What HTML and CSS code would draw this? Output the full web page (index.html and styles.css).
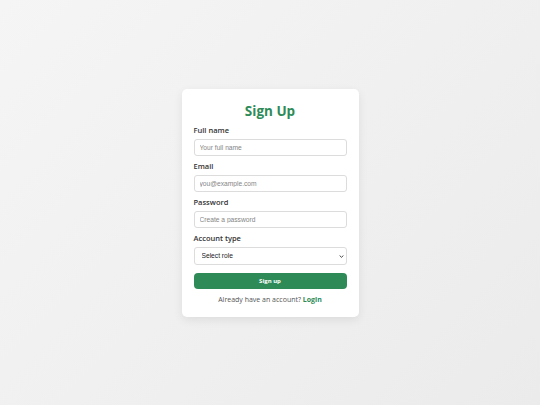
FILE: index.html
```html
<!DOCTYPE html>
<html lang="en">
<head>
<meta charset="utf-8">
<title>Sign Up</title>
<link rel="stylesheet" href="styles.css">
</head>
<body>
<main class="page">
  <form class="card">
    <h2 class="title">Sign Up</h2>
    <div class="field">
      <label class="label" for="name">Full name</label>
      <input class="input" id="name" type="text" placeholder="Your full name">
    </div>
    <div class="field">
      <label class="label" for="email">Email</label>
      <input class="input" id="email" type="email" placeholder="you@example.com">
    </div>
    <div class="field">
      <label class="label" for="pw">Password</label>
      <input class="input" id="pw" type="password" placeholder="Create a password">
    </div>
    <div class="field">
      <label class="label" for="role">Account type</label>
      <div class="select-wrap">
        <select class="select" id="role">
          <option>Select role</option>
          <option>Student</option>
          <option>Teacher</option>
        </select>
        <svg class="chev" width="5" height="3" viewBox="0 0 5 3"><path d="M0.6 0.5 L2.5 2.3 L4.4 0.5" fill="none" stroke="#333" stroke-width="0.9"/></svg>
      </div>
    </div>
    <button class="btn" type="button">Sign up</button>
    <p class="footer">Already have an account? <a class="link" href="#">Login</a></p>
  </form>
</main>
</body>
</html>
```
FILE: styles.css
```css
* { box-sizing: border-box; }
html, body { margin: 0; padding: 0; height: 100%; }
body {
  font-family: "Open Sans", "Noto Sans", sans-serif;
  background: linear-gradient(135deg, #f5f5f5 0%, #ebebeb 100%);
}
.page {
  height: 100%;
  display: flex;
  align-items: center;
  justify-content: center;
}
.card {
  width: 177px;
  background: #fff;
  border-radius: 5px;
  padding: 12px 12px 11px;
  box-shadow: 0 3px 10px rgba(0,0,0,0.08);
  display: flex;
  flex-direction: column;
}
.title {
  margin: 0 0 4px;
  text-align: center;
  color: #2e8b57;
  font-size: 13.5px;
  line-height: 20px;
  font-weight: 700;
}
.field {
  display: flex;
  flex-direction: column;
  margin-bottom: 5px;
}
.label {
  font-size: 7.5px;
  line-height: 11px;
  font-weight: 600;
  color: #333;
  margin-bottom: 3px;
}
.input, .select {
  height: 17px;
  border: 1px solid #dcdcdc;
  border-radius: 3px;
  padding: 0 5px;
  font-family: "Liberation Sans", Arial, sans-serif;
  font-size: 6.67px;
  color: #222;
  background: #fff;
  outline: none;
}
.input::placeholder { color: #858585; }
.select-wrap {
  position: relative;
  display: flex;
  flex-direction: column;
}
.select {
  -webkit-appearance: none;
  appearance: none;
  height: 18px;
  padding: 0 7px;
  color: #1a1a1a;
  width: 100%;
}
.chev {
  position: absolute;
  right: 3px;
  top: 8px;
  pointer-events: none;
}
.btn {
  margin-top: 3px;
  height: 16px;
  border: none;
  border-radius: 4px;
  background: #2e8b57;
  color: #fff;
  font-family: "Open Sans", "Noto Sans", sans-serif;
  font-size: 6px;
  font-weight: 700;
}
.footer {
  margin: 5px 0 0;
  text-align: center;
  font-size: 7px;
  line-height: 12px;
  color: #555;
}
.link {
  color: #2e8b57;
  font-weight: 700;
  text-decoration: none;
}
```
